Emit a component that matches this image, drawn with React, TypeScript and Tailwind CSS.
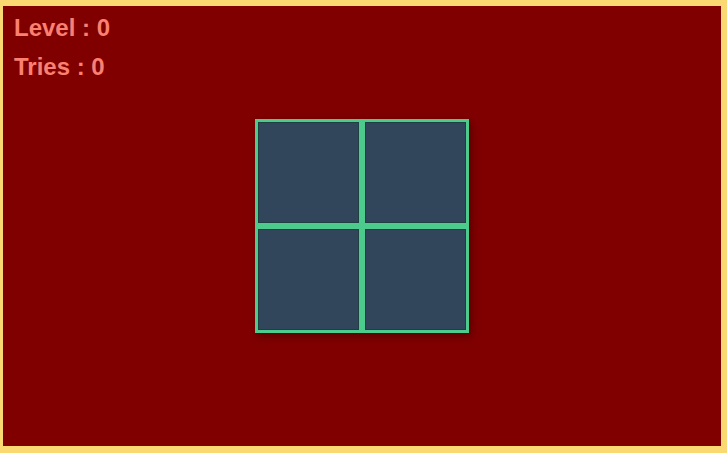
import React from 'react'

const cells = [0, 1, 2, 3]

export default function App() {
  return (
    <div
      className="w-[727px] h-[453px] bg-[#800000] border-[#fbd972] border-t-[6px] border-l-[3px] border-r-[6px] border-b-[7px] flex flex-col text-[#fa8072]"
      style={{ fontFamily: '"Liberation Sans", Arial, sans-serif' }}
    >
      {/* scoreboard */}
      <div className="pt-[2px] pl-[11px] text-[24px] font-bold leading-[39px] h-[80px]">
        <div>Level : 0</div>
        <div>Tries : 0</div>
      </div>

      {/* board */}
      <div className="flex-1 flex items-center justify-center">
        <div className="grid grid-cols-2 shadow-[2px_3px_8px_rgba(0,0,0,0.35)]">
          {cells.map((c) => (
            <div
              key={c}
              className="w-[107px] h-[107px] bg-[#31465b] border-[3px] border-[#4ccb8c] shadow-[inset_0_0_0_1px_rgba(20,60,50,0.6)]"
            />
          ))}
        </div>
      </div>

      <div className="h-[80px]" />
    </div>
  )
}
